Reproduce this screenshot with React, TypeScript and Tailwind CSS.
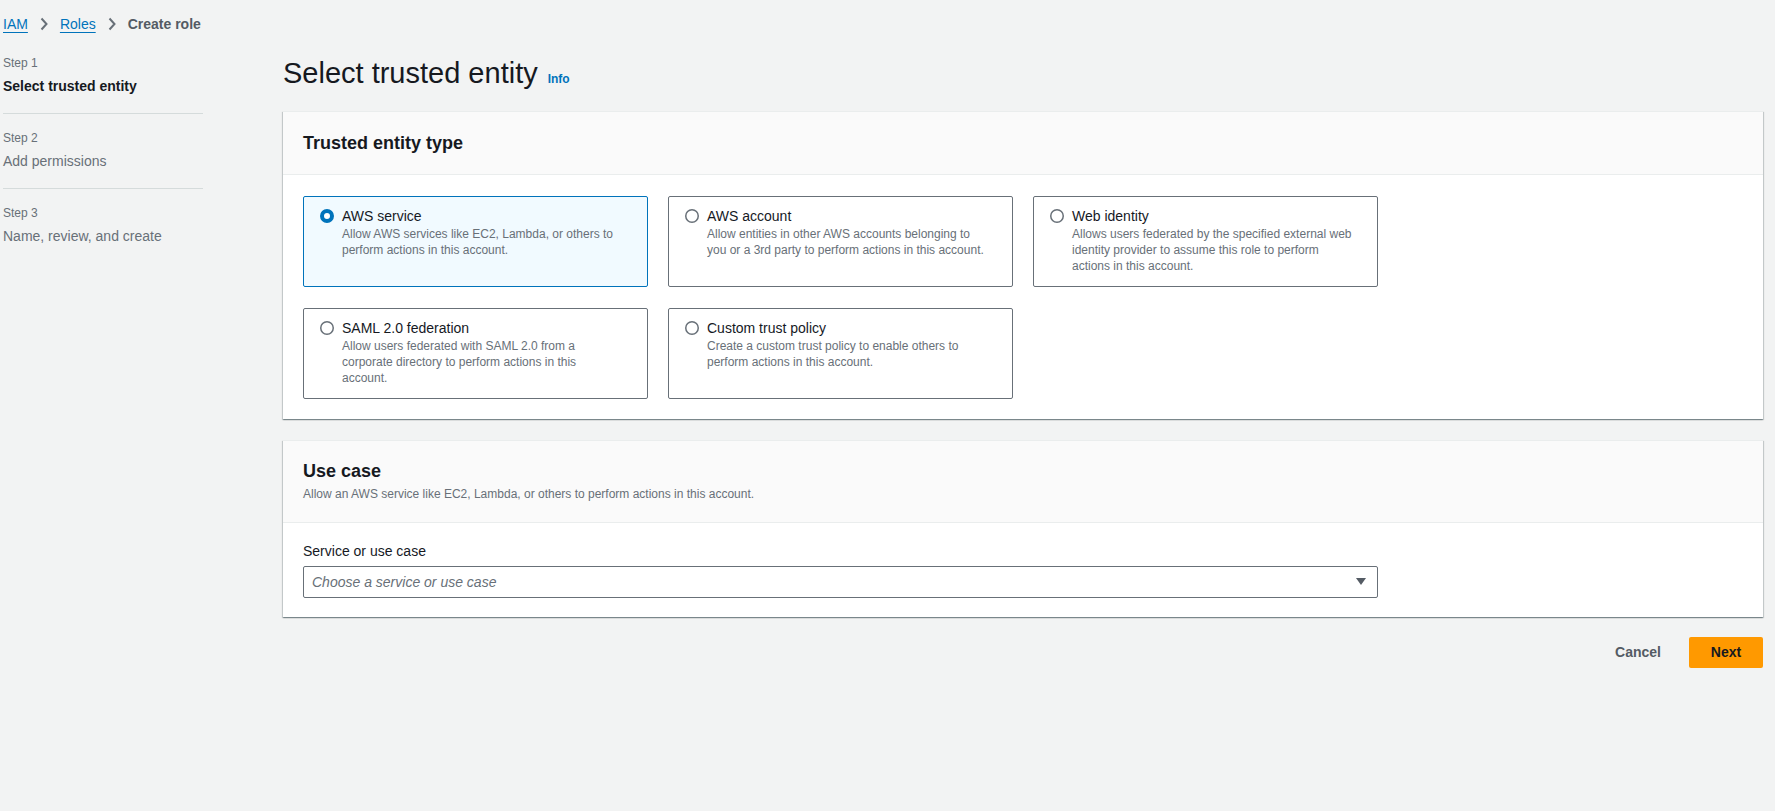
import React from "react";

const Radio = ({ checked }: { checked?: boolean }) =>
  checked ? (
    <svg width="14" height="14" viewBox="0 0 14 14" className="shrink-0">
      <circle cx="7" cy="7" r="5" fill="#ffffff" stroke="#0073bb" strokeWidth="4" />
    </svg>
  ) : (
    <svg width="14" height="14" viewBox="0 0 14 14" className="shrink-0">
      <circle cx="7" cy="7" r="6.25" fill="#ffffff" stroke="#687078" strokeWidth="1.5" />
    </svg>
  );

const Chevron = () => (
  <svg width="8" height="14" viewBox="0 0 8 14" className="mx-[12px] shrink-0">
    <path d="M1.5 1.5 L6.5 7 L1.5 12.5" fill="none" stroke="#687078" strokeWidth="2" />
  </svg>
);

type Tile = { title: string; lines: string[]; checked?: boolean };

const tiles: Tile[] = [
  { title: "AWS service", lines: ["Allow AWS services like EC2, Lambda, or others to", "perform actions in this account."], checked: true },
  { title: "AWS account", lines: ["Allow entities in other AWS accounts belonging to", "you or a 3rd party to perform actions in this account."] },
  { title: "Web identity", lines: ["Allows users federated by the specified external web", "identity provider to assume this role to perform", "actions in this account."] },
  { title: "SAML 2.0 federation", lines: ["Allow users federated with SAML 2.0 from a", "corporate directory to perform actions in this", "account."] },
  { title: "Custom trust policy", lines: ["Create a custom trust policy to enable others to", "perform actions in this account."] },
];

const TileCard = ({ t }: { t: Tile }) => (
  <div
    className={
      t.checked
        ? "h-[91px] rounded-[2px] border border-[#0073bb] bg-[#f1faff] pl-[16px] pr-[12px] pt-[9px]"
        : "h-[91px] rounded-[2px] border border-[#687078] bg-white pl-[16px] pr-[12px] pt-[9px]"
    }
  >
    <div className="flex items-center gap-[8px]">
      <Radio checked={t.checked} />
      <span className="text-[14px] leading-[20px] text-[#16191f]">{t.title}</span>
    </div>
    <div className="pl-[22px] text-[12px] leading-[16px] text-[#687078]">
      {t.lines.map((l) => (
        <div key={l} className="whitespace-nowrap">{l}</div>
      ))}
    </div>
  </div>
);

const panelCls =
  "bg-white border-t border-[#eaeded] shadow-[0_1px_1px_0_rgba(0,28,36,0.3),1px_1px_1px_0_rgba(0,28,36,0.15),-1px_1px_1px_0_rgba(0,28,36,0.15)]";

export default function App() {
  return (
    <div className="min-h-[811px] bg-[#f2f3f3] pl-[3px] pr-[12px] pt-[14px] font-['Liberation_Sans',Arial,sans-serif] text-[#16191f]">
      {/* Breadcrumb */}
      <div className="flex h-[20px] items-center text-[14px] leading-[20px]">
        <a className="text-[#0073bb] underline decoration-1 underline-offset-[3px]">IAM</a>
        <Chevron />
        <a className="text-[#0073bb] underline decoration-1 underline-offset-[3px]">Roles</a>
        <Chevron />
        <span className="font-bold text-[#545b64]">Create role</span>
      </div>

      <div className="mt-[21px] flex gap-[80px]">
        {/* Left steps nav */}
        <nav className="w-[200px] shrink-0">
          <div className="border-b border-[#d5dbdb] pb-[17px]">
            <div className="text-[12px] leading-[16px] text-[#687078]">Step 1</div>
            <div className="mt-[5px] text-[14px] font-bold leading-[20px] text-[#16191f]">Select trusted entity</div>
          </div>
          <div className="border-b border-[#d5dbdb] pb-[17px] pt-[16px]">
            <div className="text-[12px] leading-[16px] text-[#687078]">Step 2</div>
            <div className="mt-[5px] text-[14px] leading-[20px] text-[#687078]">Add permissions</div>
          </div>
          <div className="pt-[16px]">
            <div className="text-[12px] leading-[16px] text-[#687078]">Step 3</div>
            <div className="mt-[5px] text-[14px] leading-[20px] text-[#687078]">Name, review, and create</div>
          </div>
        </nav>

        {/* Main */}
        <main className="flex-1">
          <div className="flex h-[36px] items-baseline">
            <h1 className="text-[29px] font-normal leading-[36px] text-[#16191f]">Select trusted entity</h1>
            <a className="ml-[10px] text-[12px] font-bold text-[#0073bb]">Info</a>
          </div>

          {/* Trusted entity type panel */}
          <section className={`mt-[20px] ${panelCls}`}>
            <div className="flex h-[63px] items-center border-b border-[#eaeded] bg-[#fafafa] px-[20px]">
              <h2 className="text-[18px] font-bold leading-[22px]">Trusted entity type</h2>
            </div>
            <div className="px-[20px] pb-[20px] pt-[21px]">
              <div className="grid w-[1075px] grid-cols-3 gap-x-[20px] gap-y-[21px]">
                {tiles.map((t) => (
                  <TileCard key={t.title} t={t} />
                ))}
              </div>
            </div>
          </section>

          {/* Use case panel */}
          <section className={`mt-[21px] ${panelCls}`}>
            <div className="border-b border-[#eaeded] bg-[#fafafa] px-[20px] pb-[20px] pt-[19px]">
              <h2 className="text-[18px] font-bold leading-[22px]">Use case</h2>
              <p className="mt-[4px] text-[12px] leading-[16px] text-[#687078]">
                Allow an AWS service like EC2, Lambda, or others to perform actions in this account.
              </p>
            </div>
            <div className="px-[20px] pb-[19px] pt-[18px]">
              <div className="text-[14px] leading-[20px] text-[#16191f]">Service or use case</div>
              <div className="mt-[5px] flex h-[32px] w-[1075px] items-center justify-between rounded-[2px] border border-[#687078] bg-white pl-[8px] pr-[11px]">
                <span className="text-[14px] italic text-[#687078]">Choose a service or use case</span>
                <svg width="10" height="8" viewBox="0 0 10 8">
                  <path d="M0 0 H10 L5 7 Z" fill="#545b64" />
                </svg>
              </div>
            </div>
          </section>

          {/* Actions */}
          <div className="mt-[20px] flex items-center justify-end gap-[8px]">
            <button className="h-[31px] px-[20px] text-[14px] font-bold text-[#545b64]">Cancel</button>
            <button className="h-[31px] w-[74px] rounded-[2px] bg-[#ff9900] text-[14px] font-bold text-[#16191f]">Next</button>
          </div>
        </main>
      </div>
    </div>
  );
}
